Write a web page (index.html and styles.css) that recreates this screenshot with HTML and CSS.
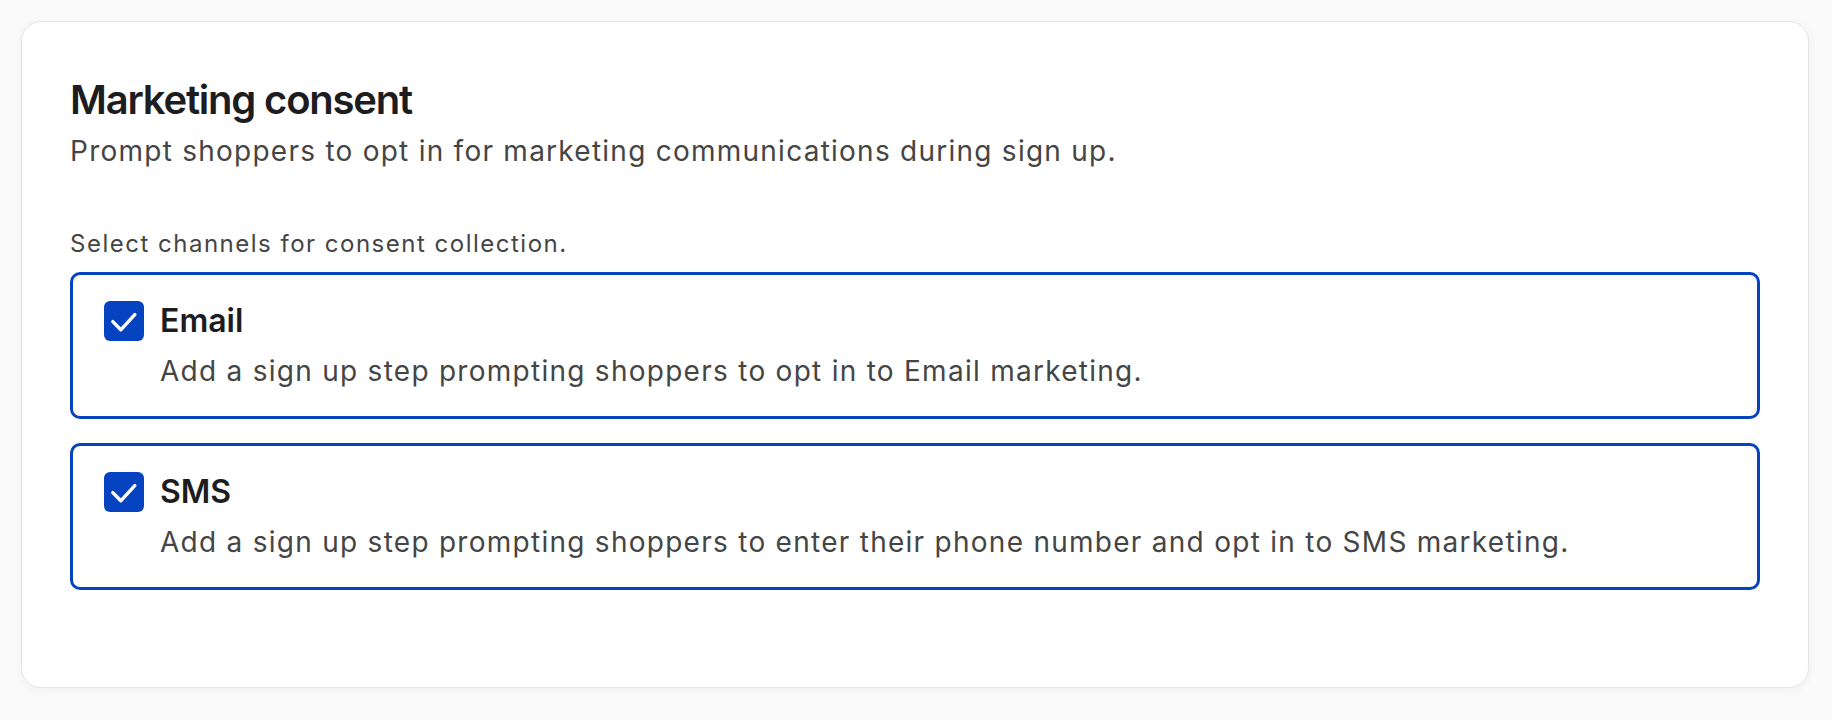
FILE: index.html
```html
<!DOCTYPE html>
<html lang="en">
<head>
    <meta charset="UTF-8">
    <meta name="viewport" content="width=device-width, initial-scale=1.0">
    <link rel="stylesheet" href="styles.css">
</head>
<body>
    <section class="panel">
        <h1 class="panel-title">Marketing consent</h1>
        <p class="panel-desc">Prompt shoppers to opt in for marketing communications during sign up.</p>

        <p class="field-label">Select channels for consent collection.</p>
        <div class="channels">
            <label class="channel">
                <span class="checkbox">
                    <svg viewBox="0 0 20 20" width="40" height="40">
                        <path d="M4.4 10.3 L8.4 14.4 L15.4 6.8" fill="none" stroke="#fff" stroke-width="1.7" stroke-linecap="round" stroke-linejoin="round"/>
                    </svg>
                </span>
                <span class="channel-text">
                    <span class="channel-name">Email</span>
                    <span class="channel-desc">Add a sign up step prompting shoppers to opt in to Email marketing.</span>
                </span>
            </label>
            <label class="channel">
                <span class="checkbox">
                    <svg viewBox="0 0 20 20" width="40" height="40">
                        <path d="M4.4 10.3 L8.4 14.4 L15.4 6.8" fill="none" stroke="#fff" stroke-width="1.7" stroke-linecap="round" stroke-linejoin="round"/>
                    </svg>
                </span>
                <span class="channel-text">
                    <span class="channel-name">SMS</span>
                    <span class="channel-desc">Add a sign up step prompting shoppers to enter their phone number and opt in to SMS marketing.</span>
                </span>
            </label>
        </div>
    </section>
</body>
</html>
```

FILE: styles.css
```css
* {
    margin: 0;
    padding: 0;
    box-sizing: border-box;
    font-family: Inter, "Noto Sans", sans-serif;
}

:root {
    --blue: #0543c1;
    --ink: #1d1d1f;
    --grey: #454545;
}

body {
    background-color: #fafafa;
    padding: 21px 23px 32px 21px;
}

.panel {
    background-color: white;
    border: 1px solid #e3e5e8;
    border-radius: 20px;
    box-shadow: 0 2px 10px rgba(0, 0, 0, 0.05);
    padding: 48px 48px 96px;
    height: 667px;
}

.panel-title {
    font-size: 40px;
    line-height: 60px;
    font-weight: 600;
    color: var(--ink);
    letter-spacing: -1.2px;
}

.panel-desc {
    font-size: 28px;
    line-height: 42px;
    color: var(--grey);
    letter-spacing: 1.25px;
}

.field-label {
    margin-top: 56px;
    font-size: 24px;
    line-height: 32px;
    color: var(--grey);
    letter-spacing: 1.5px;
}

.channels {
    margin-top: 12px;
    display: flex;
    flex-direction: column;
    gap: 24px;
}

.channel {
    display: flex;
    gap: 16px;
    border: 3px solid var(--blue);
    border-radius: 10px;
    padding: 26px 31px 25px;
    cursor: pointer;
}

.checkbox {
    flex: none;
    width: 40px;
    height: 40px;
    border-radius: 6px;
    background-color: var(--blue);
    display: flex;
}

.channel-text {
    display: flex;
    flex-direction: column;
    gap: 10px;
}

.channel-name {
    font-size: 32px;
    line-height: 40px;
    font-weight: 600;
    color: var(--ink);
}

.channel-desc {
    font-size: 28px;
    line-height: 40px;
    color: var(--grey);
    letter-spacing: 1.27px;
}
```
